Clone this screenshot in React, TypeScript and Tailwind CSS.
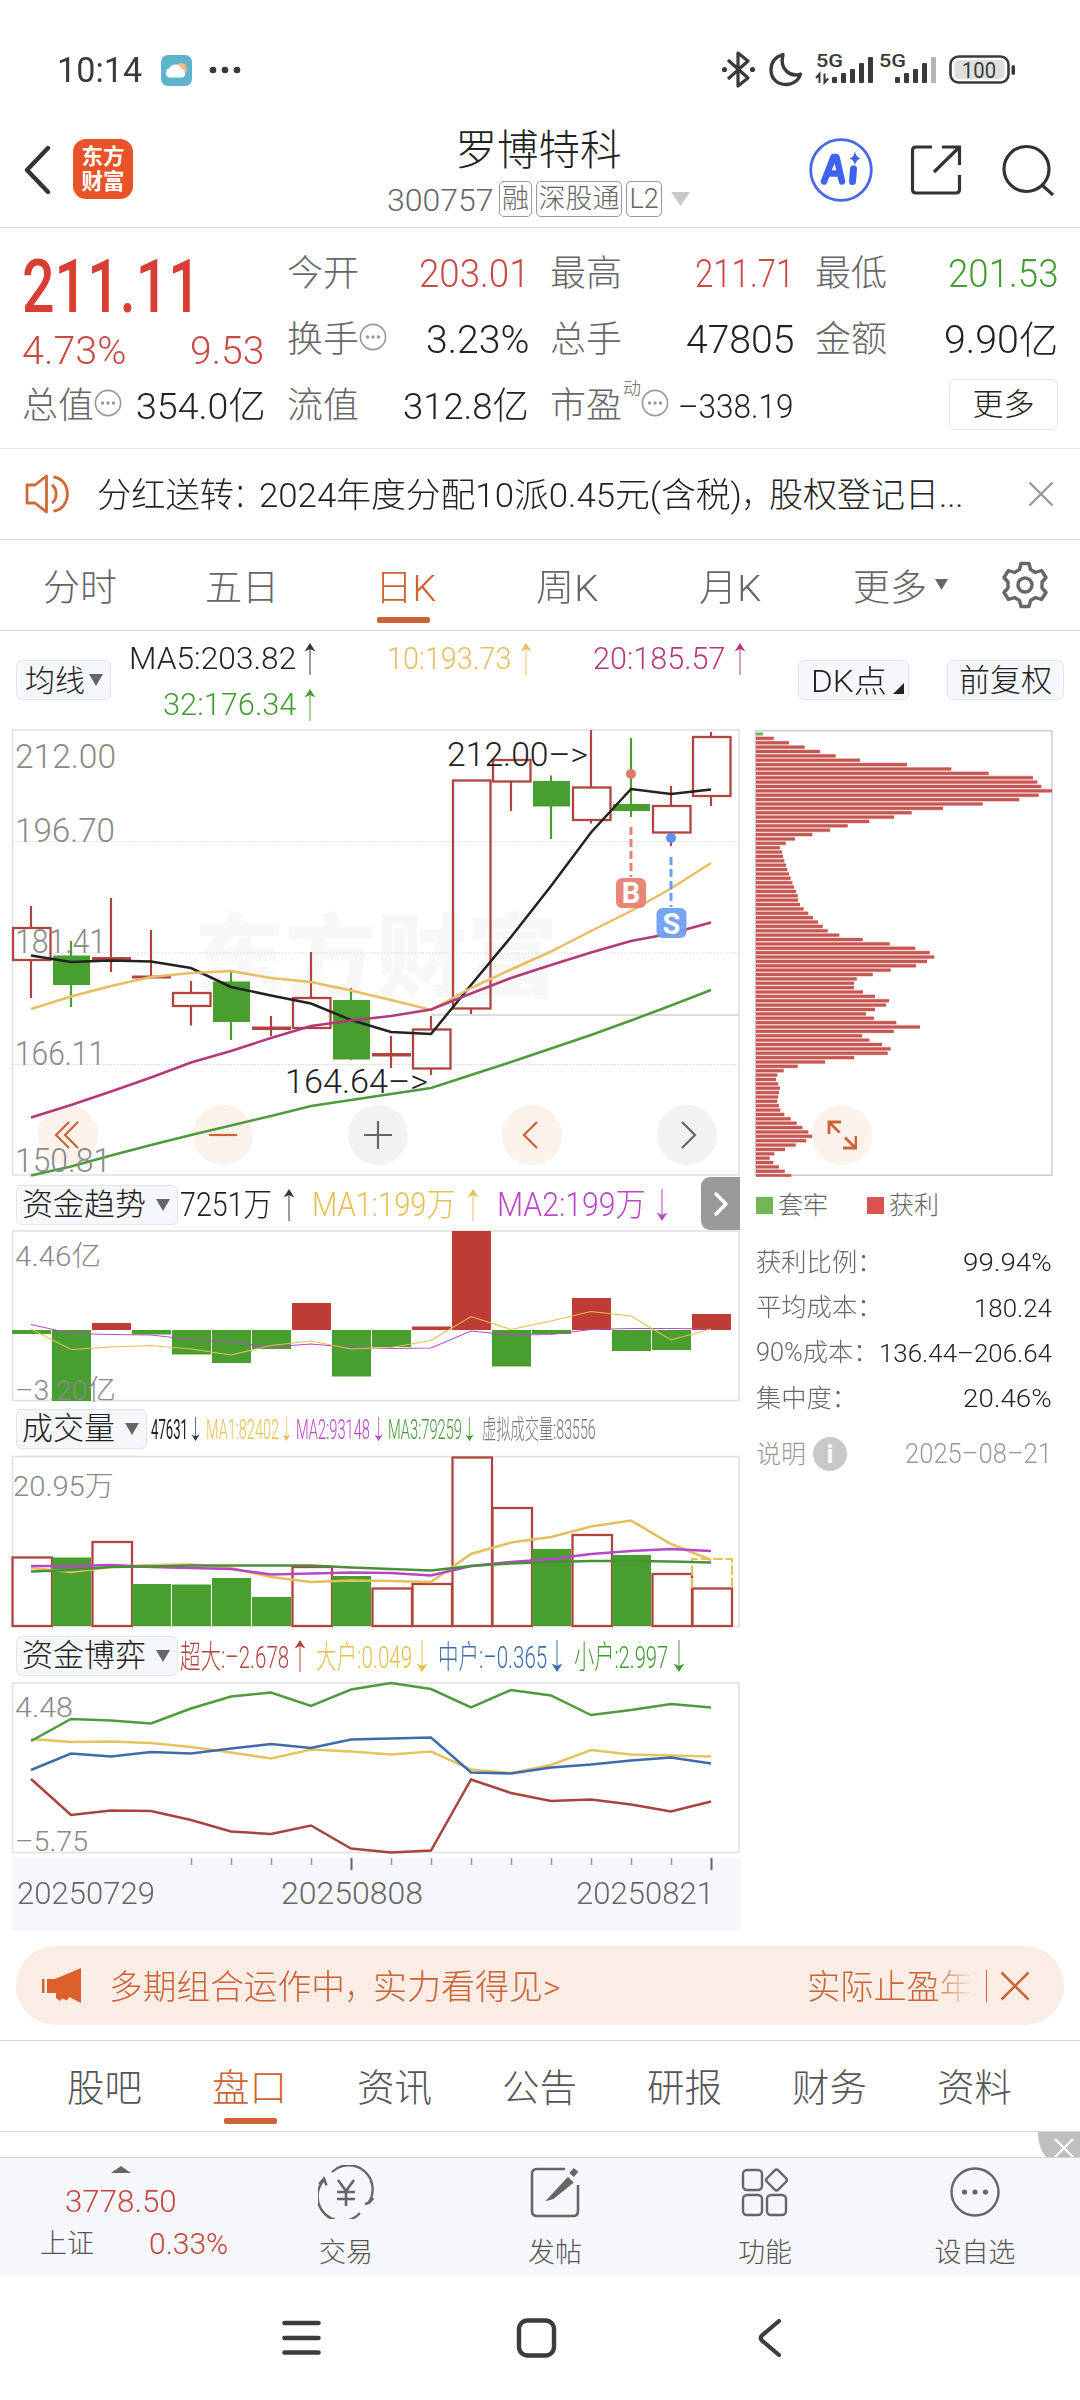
import React, { useLayoutEffect, useRef, useState } from "react";

/* Single-line label that is squeezed or stretched to the width of its box. */
function Fit({ className = "", children }: { className?: string; children: React.ReactNode }) {
  const outer = useRef<HTMLSpanElement>(null);
  const inner = useRef<HTMLSpanElement>(null);
  const [ratio, setRatio] = useState(1);
  useLayoutEffect(() => {
    if (outer.current && inner.current) {
      setRatio(outer.current.clientWidth / inner.current.offsetWidth);
    }
  }, [children]);
  return (
    <span ref={outer} className={"block shrink-0 whitespace-nowrap leading-none " + className}>
      <span ref={inner} className="inline-block origin-left" style={{ transform: `scaleX(${ratio})` }}>
        {children}
      </span>
    </span>
  );
}

const xs = Array.from({ length: 18 }, (_, i) => 31 + i * 40);
const line = (ys: number[]) => ys.map((y, i) => `${xs[i]},${y}`).join(" ");

const RED = "#b0453f";
const GREEN = "#489e2e";

type Candle = { c: "r" | "g"; t: number; b: number; h: number; l: number; flat?: boolean };
const candles: Candle[] = [
  { c: "r", t: 928, b: 960, h: 906, l: 998 },
  { c: "g", t: 955.5, b: 985, h: 941, l: 1007 },
  { c: "r", t: 957, b: 960, h: 898, l: 972, flat: true },
  { c: "r", t: 975.5, b: 978.5, h: 930, l: 977, flat: true },
  { c: "r", t: 993, b: 1006, h: 981, l: 1025.5 },
  { c: "g", t: 981.5, b: 1022, h: 972, l: 1040 },
  { c: "r", t: 1026.5, b: 1030, h: 1016, l: 1036, flat: true },
  { c: "r", t: 998, b: 1028, h: 952, l: 998 },
  { c: "g", t: 1000, b: 1059.5, h: 988, l: 1060 },
  { c: "r", t: 1053, b: 1056.5, h: 1036, l: 1068, flat: true },
  { c: "r", t: 1029.5, b: 1068.5, h: 1016, l: 1075 },
  { c: "r", t: 780.5, b: 1008.5, h: 780, l: 1014 },
  { c: "r", t: 760, b: 781.5, h: 760, l: 811 },
  { c: "g", t: 781, b: 806.5, h: 775.5, l: 839 },
  { c: "r", t: 787.5, b: 820, h: 730, l: 823.5 },
  { c: "g", t: 804, b: 811, h: 738, l: 817 },
  { c: "r", t: 806, b: 832.5, h: 786, l: 846 },
  { c: "r", t: 737, b: 796, h: 732, l: 806 },
];

const ma5 = [955.5, 962, 960.5, 961.5, 968, 987, 995.5, 1003.5, 1020, 1032, 1034, 985, 937, 886, 832.5, 789, 794, 789.5];
const ma10 = [1009, 996.5, 986, 977, 973, 971, 978, 982, 990.5, 1000, 1010, 988, 969.5, 951.5, 931, 911, 888.5, 863];
const ma20 = [1117.5, 1105, 1091.5, 1077.5, 1062.5, 1051, 1038, 1026, 1020.5, 1016, 1009.5, 993.5, 978, 965, 952.5, 941, 933.5, 922.5];
const ma32 = [1175.5, 1166.5, 1155.5, 1145, 1135, 1125.5, 1116, 1106, 1100, 1094, 1088, 1075, 1062, 1048.5, 1035, 1020.5, 1005.5, 990];

const trend = [1334, 1401, 1323, 1334.5, 1354.5, 1363, 1349, 1303, 1376.5, 1347, 1326.5, 1231, 1366.5, 1334, 1298, 1351, 1350, 1314];
const trendA = [1329, 1349.5, 1347, 1345.5, 1349, 1355, 1345.5, 1341, 1349, 1347.5, 1340.5, 1316.5, 1329.5, 1321, 1311.5, 1316, 1340, 1329];
const trendB = [1324.5, 1333.5, 1334.5, 1335, 1339.5, 1342, 1347, 1344, 1347.5, 1348.5, 1348, 1331, 1335, 1334.5, 1329.5, 1328.5, 1328.5, 1329];

const volume: [string, number][] = [
  ["r", 1557.5], ["g", 1557.5], ["r", 1542], ["g", 1584], ["g", 1584.5], ["g", 1578], ["g", 1597], ["r", 1567], ["g", 1576],
  ["r", 1588.5], ["r", 1584], ["r", 1457.5], ["r", 1508], ["g", 1549], ["r", 1535], ["g", 1555], ["r", 1574], ["r", 1588.5],
];
const volA = [1568, 1572, 1567, 1565, 1564.5, 1568, 1577, 1582, 1580.5, 1581, 1582, 1554, 1542.5, 1537, 1526.5, 1520.5, 1544, 1560];
const volB = [1566, 1566, 1565, 1567, 1568, 1569, 1574.5, 1573.5, 1572.5, 1573, 1575.5, 1566, 1562, 1559, 1554, 1551, 1549, 1551];
const volC = [1571.5, 1570, 1567, 1566.5, 1565.5, 1565.5, 1565.5, 1565.5, 1567.5, 1569, 1570.5, 1566, 1563.5, 1562, 1561, 1561, 1561.5, 1562.5];

const gameG = [1741, 1719, 1720.5, 1723.5, 1708.5, 1696.5, 1692.5, 1706, 1689.5, 1683, 1689, 1707.5, 1690, 1695.5, 1715, 1710, 1704, 1707.5];
const gameY = [1739, 1742, 1741.5, 1743, 1747, 1752.5, 1758.5, 1749.5, 1751.5, 1754.5, 1751.5, 1769.5, 1773, 1765, 1750, 1754.5, 1755.5, 1756.5];
const gameB = [1770, 1753.5, 1756.5, 1752, 1753.5, 1748.5, 1744, 1748, 1739.5, 1738.5, 1737.5, 1772.5, 1773.5, 1767.5, 1764.5, 1760.5, 1757.5, 1763.5];
const gameR = [1779, 1815, 1810.5, 1811, 1820, 1831.5, 1834, 1825.5, 1848.5, 1852.5, 1850.5, 1779.5, 1793, 1801, 1799.5, 1804.5, 1811.5, 1801.5];

const chips = [
  7, 17.7, 33, 48.7, 64, 79.7, 104, 151, 195.3, 232.7, 277, 281.3, 285.3, 296, 282.7, 263.3, 226.7, 187, 155.7, 138, 113.3, 91.7, 74,
  56.3, 39, 29.7, 24, 26, 27, 28.3, 30, 31.3, 33, 34.7, 36.3, 38, 40, 41.7, 42, 44, 47.7, 52.3, 57, 62, 66.7, 71.7, 83.3, 106.7, 133.7,
  159.3, 173.7, 178.3, 171, 160, 134.7, 116.7, 100.7, 98, 98, 107, 119, 133, 130, 119, 110, 118, 140.3, 164, 137.7, 106, 113.3, 126,
  134.7, 131.7, 98.3, 69, 41.7, 27.7, 21.3, 20, 22.3, 24, 23, 22, 21.3, 23, 24.3, 28.3, 34.7, 40.7, 46.3, 52.3, 58.3, 50.3, 39.7, 29,
  18.3, 13.7, 17.3, 23, 28.7, 35.3,
];

function Label({ x, y, w, size = 34, fill = "#8a8a8a", children }: { x: number; y: number; w: number; size?: number; fill?: string; children: string }) {
  return (
    <text x={x} y={y} textLength={w} lengthAdjust="spacingAndGlyphs" fontSize={size} fill={fill}>
      {children}
    </text>
  );
}

function Frame({ top, bottom }: { top: number; bottom: number }) {
  return <rect x={12.5} y={top} width={726.5} height={bottom - top} fill="none" stroke="#e2e2e2" strokeWidth={1.6} />;
}

function PriceChart() {
  return (
    <svg width="741" height="450" viewBox="0 728 741 450" className="relative block overflow-visible">
      <text x="194" y="989" fontSize="90" fontWeight="900" fill="#f7f7f7" textLength="364" lengthAdjust="spacingAndGlyphs">东方财富</text>
      <Frame top={730} bottom={1175} />
      {[841.5, 953, 1064.5].map((y) => (
        <line key={y} x1="12" x2="739" y1={y} y2={y} stroke="#d9d9d9" strokeDasharray="1.5 1.5" />
      ))}
      <line x1="431" x2="739" y1="1015" y2="1015" stroke="#d2d2d2" strokeWidth="1.5" />
      {candles.map((k, i) => {
        const col = k.c === "r" ? RED : GREEN;
        const solid = k.c === "g" || k.flat;
        return (
          <g key={i}>
            <line x1={xs[i]} x2={xs[i]} y1={k.h} y2={solid ? k.l : k.t} stroke={col} strokeWidth="2.2" />
            {!solid && k.l > k.b && <line x1={xs[i]} x2={xs[i]} y1={k.b} y2={k.l} stroke={col} strokeWidth="2.2" />}
            {solid ? (
              <rect x={xs[i] - (k.flat ? 19 : 18)} y={k.t} width={k.flat ? 39 : 37} height={k.b - k.t} fill={col} />
            ) : (
              <rect x={xs[i] - 18} y={k.t} width="37.5" height={k.b - k.t} fill="none" stroke={col} strokeWidth="2.3" />
            )}
          </g>
        );
      })}
      <g fill="none" strokeWidth="2.500">
        <polyline points={line(ma5)} stroke="#222" />
        <polyline points={line(ma10)} stroke="#e9bd64" />
        <polyline points={line(ma20)} stroke="#b3397a" />
        <polyline points={line(ma32)} stroke="#4f9a3c" />
      </g>
      <circle cx="631" cy="774" r="5" fill="#e17a66" />
      <line x1="631" x2="631" y1="827" y2="877" stroke="#df8374" strokeWidth="3" strokeDasharray="8 4" />
      <rect x="616" y="878" width="30" height="30" rx="6" fill="#e87f70" fillOpacity=".95" />
      <circle cx="671" cy="838" r="5" fill="#5b8ff0" />
      <line x1="671" x2="671" y1="857" y2="907" stroke="#6aa0f0" strokeWidth="3" strokeDasharray="8 4" />
      <rect x="656.5" y="908" width="30" height="30" rx="6" fill="#6f9ef2" fillOpacity=".95" />
      <g fill="#fff" fontSize="29" fontWeight="700" textAnchor="middle">
        <text x="631" y="903">B</text>
        <text x="671.5" y="933.5">S</text>
      </g>
      <Label x={15} y={768} w={101}>212.00</Label>
      <Label x={15} y={842} w={100}>196.70</Label>
      <Label x={15} y={953} w={91}>181.41</Label>
      <Label x={15} y={1064.5} w={90}>166.11</Label>
      <Label x={15} y={1171.5} w={96}>150.81</Label>
      <Label x={447} y={766} w={141} fill="#222">212.00–&gt;</Label>
      <Label x={285} y={1092.5} w={143} fill="#222">164.64–&gt;</Label>
    </svg>
  );
}

function TrendChart() {
  return (
    <svg width="741" height="172" viewBox="0 1230 741 172" className="block overflow-visible">
      <Frame top={1231} bottom={1400.5} />
      {trend.map((v, i) => (
        <rect key={i} x={xs[i] - 19} y={Math.min(v, 1330)} width="39" height={Math.abs(v - 1330)} fill={v < 1330 ? "#be3b36" : GREEN} />
      ))}
      <polyline points={line(trendB)} fill="none" stroke="#b04fc0" strokeWidth="1.1" />
      <polyline points={line(trendA)} fill="none" stroke="#e3c04f" strokeWidth="1.1" />
      <Label x={15} y={1265.5} w={86} size={28}>4.46亿</Label>
      <Label x={15} y={1399.5} w={101} size={28}>–3.20亿</Label>
    </svg>
  );
}

function VolumeChart() {
  return (
    <svg width="741" height="174" viewBox="0 1455 741 174" className="block overflow-visible">
      <Frame top={1456.5} bottom={1626.5} />
      {volume.map(([c, t], i) =>
        c === "g" ? (
          <rect key={i} x={xs[i] - 19} y={t} width="39" height={1626 - t} fill={GREEN} />
        ) : (
          <rect key={i} x={xs[i] - 18.5} y={t} width="39.5" height={1626 - t} fill="#fff" stroke={RED} strokeWidth="2.3" />
        ),
      )}
      <path d="M692 1588V1559H732V1588" fill="none" stroke="#e8bf58" strokeWidth="2" strokeDasharray="10 2.5" />
      <g fill="none" strokeWidth="2.6">
        <polyline points={line(volA)} stroke="#e3c05f" />
        <polyline points={line(volB)} stroke="#b847c4" />
        <polyline points={line(volC)} stroke="#4b8f3c" />
      </g>
      <Label x={13} y={1496} w={101} size={28}>20.95万</Label>
    </svg>
  );
}

function GameChart() {
  return (
    <svg width="741" height="173" viewBox="0 1682 741 173" className="block overflow-visible">
      <Frame top={1683} bottom={1852.5} />
      <g fill="none" strokeWidth="2.5">
        <polyline points={line(gameY)} stroke="#e3c45f" />
        <polyline points={line(gameG)} stroke="#4f9a3c" />
        <polyline points={line(gameB)} stroke="#3d6bab" />
        <polyline points={line(gameR)} stroke="#a8433e" />
      </g>
      <Label x={15} y={1717} w={58} size={28}>4.48</Label>
      <Label x={15} y={1850.5} w={73} size={28}>–5.75</Label>
    </svg>
  );
}

function ChipChart() {
  return (
    <svg width="300" height="448" viewBox="754 729 300 448" className="block">
      <rect x="755.5" y="730.8" width="296.5" height="444.4" fill="none" stroke="#c9c9c9" strokeWidth="1.4" />
      {chips.map((w, i) => {
        const y = 734 + i * 4.373;
        return (
          <g key={i}>
            {i > 0 && <rect x="756" y={y - 2.2} width={w} height={i === 101 ? 3.2 : 4.4} fill="#f8cfcc" />}
            <rect x="756" y={y - 1.5} width={w} height={i === 101 ? 2.6 : 3} fill={i === 0 ? "#74b25e" : "#c45754"} />
          </g>
        );
      })}
    </svg>
  );
}

function Arrow({ down = false, className = "" }: { down?: boolean; className?: string }) {
  return (
    <svg width="12" height="32" viewBox="0 0 12 32" className={"block shrink-0 " + className}>
      <g transform={down ? "rotate(180 6 16)" : undefined}>
        <path d="M6 4V32" stroke="currentColor" strokeWidth="1.4" opacity=".7" />
        <path d="M6 0L11.4 8.6L6 6L.6 8.6Z" fill="currentColor" />
      </g>
    </svg>
  );
}

function Caret({ className = "" }: { className?: string }) {
  return (
    <svg width="14" height="12" viewBox="0 0 14 12" className={"block shrink-0 " + className}>
      <path d="M0 0H14L7 12Z" fill="#666" />
    </svg>
  );
}

function Dots({ className = "" }: { className?: string }) {
  return (
    <svg width="28" height="28" viewBox="0 0 28 28" className={"block shrink-0 " + className} fill="#999">
      <circle cx="14" cy="14" r="12.6" fill="none" stroke="#999" strokeWidth="1.6" />
      <circle cx="8.5" cy="14" r="1.7" /><circle cx="14" cy="14" r="1.7" /><circle cx="19.5" cy="14" r="1.7" />
    </svg>
  );
}

function StatusBar() {
  return (
    <div className="flex h-[120px] items-center pt-[20px] text-[#3a3a3a]">
      <Fit className="ml-[57px] w-[85px] pt-[1px] text-[35px] font-normal">10:14</Fit>
      <svg width="31" height="31" viewBox="0 0 31 31" className="ml-[19px]">
        <rect width="31" height="31" rx="7" fill="#5fb4cb" />
        <circle cx="20" cy="14" r="6" fill="#f5b98a" />
        <path d="M8 22.5a5 5 0 0 1 .5-9.500a6.500 6.500 0 0 1 12 1a4.500 4.500 0 0 1 1 8.500z" fill="#fff" />
      </svg>
      <svg width="32" height="8" viewBox="0 0 32 8" className="ml-[17px]" fill="#3a3a3a">
        <circle cx="4" cy="4" r="3.3" /><circle cx="16" cy="4" r="3.3" /><circle cx="28" cy="4" r="3.3" />
      </svg>
      <svg width="300" height="40" viewBox="720 50 300 40" className="ml-[479px] block" fill="#3a3a3a">
        <path d="M728 60L748 78L738 86V53L748 61L728 79" fill="none" stroke="#3a3a3a" strokeWidth="3.2" strokeLinejoin="round" />
        <circle cx="724.500" cy="69.500" r="2.600" /><circle cx="752.500" cy="69.500" r="2.600" />
        <path d="M783 54.500C775 57 771 63 771 70C771 79 777.500 84.500 786 84.500C793 84.500 798.500 80.500 800.500 74C791 77.500 779 70 783 54.500Z" fill="none" stroke="#3a3a3a" strokeWidth="3.400" strokeLinejoin="round" />
        <g fontSize="17.500" fontWeight="500">
          <text x="816" y="67" textLength="27" lengthAdjust="spacingAndGlyphs">5G</text>
          <text x="879" y="67" textLength="27" lengthAdjust="spacingAndGlyphs">5G</text>
        </g>
        <path d="M819.500 83V74L816 78M824.500 73.500V82.500L828 78.500" fill="none" stroke="#3a3a3a" strokeWidth="2" />
        <rect x="832" y="77" width="5" height="6" rx="1" /><rect x="841" y="73" width="5" height="10" rx="1" />
        <rect x="850" y="69" width="5" height="14" rx="1" /><rect x="859" y="63" width="5" height="20" rx="1" /><rect x="868" y="57" width="5" height="26" rx="1" />
        <rect x="895" y="77" width="5" height="6" rx="1" /><rect x="904" y="73" width="5" height="10" rx="1" />
        <rect x="913" y="69" width="5" height="14" rx="1" /><rect x="922" y="63" width="5" height="20" rx="1" />
        <rect x="931" y="57" width="5" height="26" rx="1" fill="#b5b5b5" />
        <rect x="950.500" y="56.500" width="58" height="26" rx="8" fill="#fff" stroke="#3a3a3a" strokeWidth="2.600" />
        <rect x="954.500" y="60" width="50" height="19" rx="4.500" fill="#dedede" />
        <rect x="1011.500" y="65" width="3.500" height="10" rx="1.700" />
        <text x="962" y="77.500" fontSize="22" fontWeight="400" textLength="34" lengthAdjust="spacingAndGlyphs">100</text>
      </svg>
    </div>
  );
}

function Tag({ className, children }: { className: string; children: string }) {
  return (
    <span className={"flex h-[36px] shrink-0 items-center justify-center rounded-[5px] border-[1.5px] border-[#999] text-[27px] text-[#666] " + className}>
      {children}
    </span>
  );
}

function Header() {
  return (
    <header className="flex h-[108px] items-center border-b border-[#d8d8d8] pb-[8px]">
      <svg width="28" height="50" viewBox="0 0 28 50" className="ml-[23px]">
        <path d="M25 3L4 25L25 47" fill="none" stroke="#333" strokeWidth="4.400" strokeLinejoin="round" strokeLinecap="round" />
      </svg>
      <div className="ml-[22px] flex h-[60px] w-[60px] -translate-y-px flex-col items-center justify-center rounded-[13px] bg-[#e9532a] text-[21.500px] font-bold leading-[25px] text-white">
        <span>东方</span>
        <span>财富</span>
      </div>
      <div className="ml-[254px] flex w-[303px] flex-col items-center">
        <span className="mt-[7px] text-[41.500px] leading-[44px] text-[#222]">罗博特科</span>
        <div className="mt-[8px] flex w-full items-center">
          <Fit className="w-[107px] pt-[1px] text-[32px] text-[#666]">300757</Fit>
          <Tag className="ml-[5px] w-[33px]">融</Tag>
          <Tag className="ml-[4px] w-[86px]">深股通</Tag>
          <Tag className="ml-[4px] w-[36px]">L2</Tag>
          <svg width="19" height="14" viewBox="0 0 19 14" className="ml-[9px]"><path d="M0 0H19L9.500 14Z" fill="#c8c8c8" /></svg>
        </div>
      </div>
      <svg width="64" height="64" viewBox="0 0 64 64" className="ml-[119px]">
        <circle cx="32" cy="32" r="30.300" fill="#fff" stroke="#4a68e8" strokeWidth="2.800" />
        <path d="M15 43.500L24.500 19H27.500L33 43.500M19 35.500H31" fill="none" stroke="#3f63f0" strokeWidth="6.500" strokeLinejoin="round" strokeLinecap="round" />
        <path d="M44.500 31L43.500 43.500" stroke="#3f63f0" strokeWidth="7" strokeLinecap="round" />
        <path d="M46 13Q46.800 19 51.500 20.500Q46.800 22 46 27.500Q45.200 22 40.500 20.500Q45.200 19 46 13Z" fill="#3f63f0" />
      </svg>
      <svg width="52" height="52" viewBox="0 0 52 52" className="ml-[37px]" fill="none" stroke="#333" strokeWidth="3.200">
        <path d="M22 3H6Q2.500 3 2.500 6.500V45.500Q2.500 49 6 49H46Q49.500 49 49.500 45.500V31" />
        <path d="M32 3H49.500V21M49 3.500L24 28" />
      </svg>
      <svg width="52" height="52" viewBox="0 0 52 52" className="ml-[40px]" fill="none" stroke="#333" strokeWidth="3.200">
        <circle cx="24.500" cy="25" r="22.500" /><path d="M40 41L51 51" />
      </svg>
    </header>
  );
}

function Cell({ label, children }: { label: React.ReactNode; children: React.ReactNode }) {
  return (
    <div className="-ml-[2px] -mr-[2px] flex h-[66px] items-center justify-between text-[36px] leading-none text-[#666]">
      <div className="flex items-center">{label}</div>
      {children}
    </div>
  );
}

function Quote() {
  return (
    <section className="grid h-[221px] grid-cols-[240px_238px_240px_239px] content-start gap-x-[25px] border-b border-[#ececec] pl-[24px] pt-[13px]">
      <div className="row-span-2 flex flex-col">
        <Fit className="-ml-[2px] mt-[8px] w-[179px] text-[75px] font-medium text-[#d93e35]">211.11</Fit>
        <div className="-ml-[2px] mt-[8px] flex justify-between text-[38px] text-[#c94a43]">
          <Fit className="w-[104px]">4.73%</Fit>
          <Fit className="w-[74px]">9.53</Fit>
        </div>
      </div>
      <Cell label="今开"><Fit className="w-[110px] text-[38px] text-[#c94a43]">203.01</Fit></Cell>
      <Cell label="最高"><Fit className="w-[99px] text-[38px] text-[#c94a43]">211.71</Fit></Cell>
      <Cell label="最低"><Fit className="w-[110px] text-[38px] text-[#459a33]">201.53</Fit></Cell>
      <Cell label={<>换手<Dots className="-mt-[6px]" /></>}><Fit className="w-[103px] text-[38px] text-[#222]">3.23%</Fit></Cell>
      <Cell label="总手"><Fit className="w-[108px] text-[38px] text-[#222]">47805</Fit></Cell>
      <Cell label="金额"><Fit className="w-[114px] text-[38px] text-[#222]">9.90亿</Fit></Cell>
      <Cell label={<>总值<Dots className="-mt-[6px]" /></>}><Fit className="w-[130px] text-[37px] text-[#222]">354.0亿</Fit></Cell>
      <Cell label="流值"><Fit className="w-[126px] text-[37px] text-[#222]">312.8亿</Fit></Cell>
      <Cell label={<>市盈<span className="-mt-[34px] ml-[1px] text-[18px]">动</span><Dots className="-mt-[6px]" /></>}>
        <Fit className="w-[116px] text-[34px] text-[#222]">–338.19</Fit>
      </Cell>
      <div className="flex h-[66px] items-center justify-end">
        <button className="-mr-[2px] -mt-[3px] flex h-[51px] w-[109px] items-center justify-center rounded-[6px] border-[1.5px] border-[#e4e4e4] pt-[1px] text-[31px] text-[#222]">更多</button>
      </div>
    </section>
  );
}

function Notice() {
  return (
    <section className="flex h-[91px] items-center border-b border-[#d8d8d8]">
      <svg width="46" height="40" viewBox="0 0 46 40" className="ml-[25px]" fill="none" stroke="#cf6a36" strokeWidth="2.800" strokeLinejoin="round">
        <path d="M2 11V29H10L21.500 38V2L10 11Z" />
        <path d="M27 11C32.500 15 32.500 25 27 29M28.500 3C47 5 47 35 28.500 37" />
      </svg>
      <div className="ml-[26px] flex w-[866px] pt-[1px] text-[34px] text-[#222]">
        <Fit className="w-[137px]">分红送转</Fit>
        <Fit className="w-[25px]">：</Fit>
        <Fit className="w-[483px]">2024年度分配10派0.45元(含税)</Fit>
        <Fit className="w-[27px]">，</Fit>
        <Fit className="w-[194px]">股权登记日...</Fit>
      </div>
      <svg width="26" height="26" viewBox="0 0 26 26" className="ml-[65px]"><path d="M1.500 1.500L24.500 24.500M24.500 1.500L1.500 24.500" stroke="#999" strokeWidth="2.400" /></svg>
    </section>
  );
}

function PeriodTabs() {
  return (
    <nav className="flex h-[91px] items-center border-b border-[#d8d8d8] pb-[1px] text-[37px] leading-none text-[#666]">
      <span className="ml-[43px] mt-[8px]">分时</span>
      <span className="ml-[88px] mt-[8px]">五日</span>
      <span className="relative ml-[96px] mt-[8px] flex w-[61px] text-[#cc6334]">
        <Fit className="w-[61px]">日K</Fit>
        <i className="absolute left-[2px] top-[47px] h-[6px] w-[53px] rounded-[2px] bg-[#cc6334]" />
      </span>
      <Fit className="ml-[100px] mt-[8px] w-[62px]">周K</Fit>
      <Fit className="ml-[101px] mt-[8px] w-[62px]">月K</Fit>
      <span className="ml-[92px] mt-[8px]">更多</span>
      <svg width="13" height="11" viewBox="0 0 13 11" className="ml-[8px]"><path d="M0 0H13L6.500 11Z" fill="#666" /></svg>
      <svg width="48" height="48" viewBox="0 0 48 48" className="ml-[53px]" fill="none" stroke="#666" strokeWidth="3.400" strokeLinejoin="round">
        <path d="M20 2.500H28L29.500 8.500L34.500 11.500L40.500 9.500L45 16.500L41 21V27L45 31.500L40.500 38.500L34.500 36.500L29.500 39.500L28 45.500H20L18.500 39.500L13.500 36.500L7.500 38.500L3 31.500L7 27V21L3 16.500L7.500 9.500L13.500 11.500L18.500 8.500Z" />
        <circle cx="24" cy="24" r="7" />
      </svg>
    </nav>
  );
}

const chipButton = "flex h-[40px] shrink-0 items-center rounded-[6px] border border-[#e2e5ea] bg-[#f6f7fa] text-[#222] ";

function AverageRow() {
  return (
    <section className="flex h-[97px] items-center text-[31.500px]">
      <button className={chipButton + "ml-[16px] w-[95px] pl-[8px] pt-[2px] text-[30px]"}>均线<Caret className="-mt-[2px] ml-[4px]" /></button>
      <div className="ml-[18px] flex w-[669px] flex-col pt-[4px]">
        <div className="flex h-[46px] items-center">
          <Fit className="w-[167px] text-[#222]">MA5:203.82</Fit>
          <Arrow className="ml-[8px] text-[#333]" />
          <Fit className="ml-[71px] w-[124px] text-[#e8bd62]">10:193.73</Fit>
          <Arrow className="ml-[9px] text-[#e8bd62]" />
          <Fit className="ml-[61px] w-[132px] text-[#b3397a]">20:185.57</Fit>
          <Arrow className="ml-[9px] text-[#b3397a]" />
        </div>
        <div className="flex h-[46px] items-center">
          <Fit className="ml-[34px] w-[133px] text-[#459a33]">32:176.34</Fit>
          <Arrow className="ml-[8px] text-[#459a33]" />
        </div>
      </div>
      <button className={chipButton + "relative w-[111px] pl-[9px] pt-[4px]"}>
        <Fit className="w-[76px] text-[31px]">DK点</Fit>
        <svg width="11" height="11" viewBox="0 0 11 11" className="absolute bottom-[5px] right-[4px]"><path d="M11 0V11H0Z" fill="#222" /></svg>
      </button>
      <button className={chipButton + "ml-[38px] w-[117px] justify-center pt-[3px] text-[31px]"}>前复权</button>
    </section>
  );
}

function RoundButton({ warm, children }: { warm?: boolean; children: React.ReactNode }) {
  return (
    <button className={(warm ? "bg-[#fbf2ec] " : "bg-[#f2f2f2] ") + "flex h-[60px] w-[60px] items-center justify-center rounded-full"}>
      <svg width="30" height="30" viewBox="0 0 30 30" fill="none" stroke={warm ? "#cc6334" : "#666"} strokeWidth="2.200">{children}</svg>
    </button>
  );
}

function Indicator({ name, className, children }: { name: string; className: string; children: React.ReactNode }) {
  return (
    <div className="flex h-[53px] items-center pl-[16px]">
      <button className={chipButton + "justify-between pl-[5px] pr-[7px] text-[31px] " + className}><span className="pt-[2px]">{name}</span><Caret /></button>
      {children}
    </div>
  );
}

function Charts() {
  return (
    <div className="w-[741px] shrink-0">
      <div className="relative">
        <div className="absolute left-[38px] top-[377px] flex w-[679px] justify-between">
          <RoundButton warm><path d="M16 2L3 15L16 28M25 2L12 15L25 28" /></RoundButton>
          <RoundButton warm><path d="M1 15H29" /></RoundButton>
          <RoundButton><path d="M1 15H29M15 1V29" /></RoundButton>
          <RoundButton warm><path d="M20 2L7 15L20 28" /></RoundButton>
          <RoundButton><path d="M10 2L23 15L10 28" /></RoundButton>
        </div>
        <PriceChart />
      </div>
      <div className="relative -mb-px text-[33px]">
        <Indicator name="资金趋势" className="w-[162px]">
          <Fit className="ml-[2px] w-[92px] text-[#222]">7251万</Fit>
          <Arrow className="ml-[11px] text-[#333]" />
          <Fit className="ml-[17px] w-[144px] text-[#e6c052]">MA1:199万</Fit>
          <Arrow className="ml-[11px] text-[#e6c052]" />
          <Fit className="ml-[18px] w-[149px] text-[#b847c4]">MA2:199万</Fit>
          <Arrow down className="ml-[10px] text-[#b847c4]" />
        </Indicator>
        <button className="absolute right-[1px] top-[-1px] flex h-[53px] w-[39px] items-center justify-center rounded-l-[9px] bg-[#9a9a9a]">
          <svg width="16" height="24" viewBox="0 0 16 24" fill="none" stroke="#fff" strokeWidth="3.400" strokeLinecap="round" strokeLinejoin="round"><path d="M3 2L13 12L3 22" /></svg>
        </button>
      </div>
      <TrendChart />
      <div className="text-[27px]">
        <Indicator name="成交量" className="w-[131px]">
          <Fit className="ml-[4px] w-[37px] pt-[3px] font-normal text-[#222]">47631</Fit>
          <Arrow down className="ml-[3px] h-[28px] w-[9px] text-[#333]" />
          <Fit className="ml-[6px] w-[73px] pt-[3px] text-[#e6c052]">MA1:82402</Fit>
          <Arrow down className="ml-[3px] h-[28px] w-[9px] text-[#e6c052]" />
          <Fit className="ml-[5px] w-[74px] pt-[3px] text-[#b847c4]">MA2:93148</Fit>
          <Arrow down className="ml-[4px] h-[28px] w-[9px] text-[#b847c4]" />
          <Fit className="ml-[5px] w-[74px] pt-[3px] text-[#459a33]">MA3:79259</Fit>
          <Arrow down className="ml-[3px] h-[28px] w-[9px] text-[#459a33]" />
          <Fit className="ml-[8px] w-[114px] pt-[3px] text-[#777]">虚拟成交量:83556</Fit>
        </Indicator>
      </div>
      <VolumeChart />
      <div className="text-[32px]">
        <Indicator name="资金博弈" className="w-[162px]">
          <Fit className="ml-[2px] w-[109px] pt-[2px] text-[#b0453f]">超大:–2.678</Fit>
          <Arrow className="ml-[5px] text-[#b0453f]" />
          <Fit className="ml-[10px] w-[96px] pt-[2px] text-[#e3c04f]">大户:0.049</Fit>
          <Arrow down className="ml-[4px] text-[#e3c04f]" />
          <Fit className="ml-[10px] w-[109px] pt-[2px] text-[#3d6bab]">中户:–0.365</Fit>
          <Arrow down className="ml-[4px] text-[#3d6bab]" />
          <Fit className="ml-[11px] w-[94px] pt-[2px] text-[#459a33]">小户:2.997</Fit>
          <Arrow down className="ml-[5px] text-[#459a33]" />
        </Indicator>
      </div>
      <GameChart />
      <div className="ml-[12px] mt-[3px] h-[73px] bg-[#f6f7fa]">
        <svg width="728" height="12" viewBox="12 0 728 12" className="block">
          {xs.slice(4).map((x) => {
            const major = x === 351 || x === 711;
            return <line key={x} x1={x + 0.500} x2={x + 0.500} y1="0" y2={major ? 12 : 7} stroke={major ? "#666" : "#999"} strokeWidth={major ? 2 : 1.500} />;
          })}
        </svg>
        <div className="flex pt-[7px] text-[32px] text-[#666]">
          <Fit className="ml-[5px] w-[138px]">20250729</Fit>
          <Fit className="ml-[126px] w-[142px]">20250808</Fit>
          <Fit className="ml-[153px] w-[138px]">20250821</Fit>
        </div>
      </div>
    </div>
  );
}

function Stat({ label, lw, vw, value }: { label: string; lw: string; vw: string; value: string }) {
  return (
    <div className="flex h-[45.300px] items-center justify-between">
      <Fit className={"text-[25.500px] text-[#666] " + lw}>{label}</Fit>
      <Fit className={"text-[26.500px] text-[#222] " + vw}>{value}</Fit>
    </div>
  );
}

function ChipPanel() {
  return (
    <div className="ml-[13px] w-[300px] pt-[1px]">
      <div className="relative">
        <ChipChart />
        <div className="absolute left-[58px] top-[376px]">
          <RoundButton warm>
            <g strokeWidth="2.800"><path d="M2 14V2H14M2 2L12.500 12.500M29 16V28H16M28.500 28L18 17.500" /></g>
          </RoundButton>
        </div>
      </div>
      <div className="ml-[2px] w-[296px]">
        <div className="flex h-[56px] items-center text-[25px] text-[#666]">
          <i className="h-[17px] w-[17px] bg-[#73b657]" />
          <span className="ml-[5px] pt-[1px]">套牢</span>
          <i className="ml-[39px] h-[17px] w-[17px] bg-[#d9534f]" />
          <span className="ml-[5px] pt-[1px]">获利</span>
        </div>
        <div className="mt-[7px]">
          <Stat label="获利比例：" lw="w-[127px]" value="99.94%" vw="w-[89px]" />
          <Stat label="平均成本：" lw="w-[127px]" value="180.24" vw="w-[78px]" />
          <Stat label="90%成本：" lw="w-[123px]" value="136.44–206.64" vw="w-[173px]" />
          <Stat label="集中度：" lw="w-[101px]" value="20.46%" vw="w-[89px]" />
        </div>
        <div className="mt-[10px] flex h-[45px] items-center text-[25px] text-[#999]">
          <span className="pt-[2px]">说明</span>
          <span className="ml-[7px] flex h-[34px] w-[34px] items-center justify-center rounded-full bg-[#c8c8c8] text-[26px] font-bold leading-none text-white">i</span>
          <Fit className="ml-[58px] w-[147px] pt-[2px] text-[27px]">2025–08–21</Fit>
        </div>
      </div>
    </div>
  );
}

function Banner() {
  return (
    <div className="mx-[16px] mt-[15px] flex h-[79px] items-center rounded-[40px] bg-[#faede6] pt-[2px] text-[34px] text-[#cc6334]">
      <svg width="42" height="36" viewBox="0 0 42 36" className="-mt-[2px] ml-[25px]" fill="#db602a">
        <rect x="1" y="11" width="2.500" height="14" />
        <path d="M6 11H14L40 0V35L28 29L26 32.500L21 30.500L19 33L15 30V25H6Z" />
      </svg>
      <div className="ml-[26px] flex w-[452px] pt-[1px]">
        <Fit className="w-[236px]">多期组合运作中</Fit>
        <Fit className="w-[28px]">，</Fit>
        <Fit className="w-[188px]">实力看得见&gt;</Fit>
      </div>
      <div className="ml-[246px] pt-[1px] [mask-image:linear-gradient(to_right,black_75%,transparent)]"><Fit className="w-[166px]">实际止盈年</Fit></div>
      <i className="-mt-[2px] ml-[13px] h-[32px] w-px bg-[#cc6334]" />
      <svg width="30" height="30" viewBox="0 0 30 30" className="-mt-[2px] ml-[13px]"><path d="M1.500 1.500L28.500 28.500M28.500 1.500L1.500 28.500" stroke="#cc6334" strokeWidth="2.600" /></svg>
    </div>
  );
}

function SectionTabs() {
  return (
    <nav className="mt-[15px] flex h-[92px] items-center justify-between border-y border-[#d8d8d8] pl-[67px] pr-[68px] pt-[6px] text-[37.500px] leading-none text-[#555]">
      {["股吧", "盘口", "资讯", "公告", "研报", "财务", "资料"].map((t, i) => (
        <span key={t} className={i === 1 ? "relative text-[#cc6334]" : ""}>
          {t}
          {i === 1 && <i className="absolute left-[12px] top-[48px] h-[6px] w-[53px] rounded-[2px] bg-[#cc6334]" />}
        </span>
      ))}
    </nav>
  );
}

function BarItem({ label, className, children }: { label: string; className: string; children: React.ReactNode }) {
  return (
    <div className={"flex w-[90px] shrink-0 flex-col items-center pt-[7px] " + className}>
      <svg width="56" height="54" viewBox="0 0 56 54" fill="none" stroke="#666" strokeWidth="2.400">{children}</svg>
      <span className="mt-[21px] whitespace-nowrap text-[27px] leading-none text-[#555]">{label}</span>
    </div>
  );
}

function BottomBar() {
  return (
    <footer className="flex h-[119px] border-t border-[#d0d2d6] bg-[#f6f7fa]">
      <div className="ml-[40px] w-[188px] pt-[8px] text-[31px] text-[#c4453f]">
        <svg width="20" height="7" viewBox="0 0 20 7" className="ml-[71px] block"><path d="M0 7L10 0L20 7Z" fill="#666" /></svg>
        <Fit className="ml-[25px] mt-[13px] w-[112px]">3778.50</Fit>
        <div className="mt-[12px] flex items-center justify-between">
          <span className="pt-[1px] text-[27px] leading-none text-[#555]">上证</span>
          <Fit className="w-[79px] text-[30px]">0.33%</Fit>
        </div>
      </div>
      <BarItem label="交易" className="ml-[73px]">
        <path d="M14 7A24 24 0 0 1 51 37M42 48A24 24 0 0 1 6 15" />
        <path d="M1 19L6 13.500L8.500 20.500M47 39L51.500 37.500L55.500 33" />
        <path d="M20 15L28 26L36 15M28 26V41M19 27H37M19 34H37" strokeWidth="2.600" />
      </BarItem>
      <BarItem label="发帖" className="ml-[119px]">
        <path d="M38 4H10Q5 4 5 9V46Q5 51 10 51H46Q51 51 51 46V20" strokeWidth="2.600" />
        <path d="M22 34L41 13.500L45 17.500L26 33Z" fill="#666" />
        <path d="M44.500 10L49 5" strokeWidth="6" />
      </BarItem>
      <BarItem label="功能" className="ml-[120px]">
        <rect x="6" y="5" width="19" height="20" rx="4" /><rect x="6" y="30" width="19" height="20" rx="4" />
        <rect x="30" y="30" width="19" height="20" rx="4" /><rect x="31.500" y="7" width="16" height="16" rx="2.500" transform="rotate(45 39.500 15)" />
      </BarItem>
      <BarItem label="设自选" className="ml-[120px]">
        <circle cx="28" cy="27" r="23.500" />
        <g fill="#666" stroke="none"><circle cx="17.500" cy="27" r="2.600" /><circle cx="28" cy="27" r="2.600" /><circle cx="38.500" cy="27" r="2.600" /></g>
      </BarItem>
    </footer>
  );
}

export default function App() {
  return (
    <main className="h-[2400px] w-[1080px] overflow-hidden bg-white font-light [font-family:Roboto,'Noto_Sans_CJK_SC',sans-serif]">
      <StatusBar />
      <Header />
      <Quote />
      <Notice />
      <PeriodTabs />
      <AverageRow />
      <div className="flex">
        <Charts />
        <ChipPanel />
      </div>
      <Banner />
      <SectionTabs />
      <div className="flex h-[25px] justify-end">
        <svg width="42" height="25" viewBox="0 0 42 25" className="block">
          <path d="M0 0H42V25H8Q0 16 0 0Z" fill="#bfbfbf" />
          <path d="M17 7L35 25M35 7L17 25" stroke="#fff" strokeWidth="2.200" />
        </svg>
      </div>
      <BottomBar />
      <div className="flex h-[123px] items-center">
        <svg width="500" height="42" viewBox="282 2317 500 42" className="ml-[282px]" fill="none" stroke="#3c3c3c">
          <path d="M284.500 2323H318.500M284.500 2338H318.500M284.500 2352.500H318.500" strokeWidth="4.600" strokeLinecap="round" />
          <rect x="519" y="2320.500" width="35" height="35" rx="8.500" strokeWidth="4.400" />
          <path d="M779 2321L762 2335.500Q759.500 2338 762 2340.500L779 2355" strokeWidth="4.200" strokeLinecap="round" />
        </svg>
      </div>
    </main>
  );
}
